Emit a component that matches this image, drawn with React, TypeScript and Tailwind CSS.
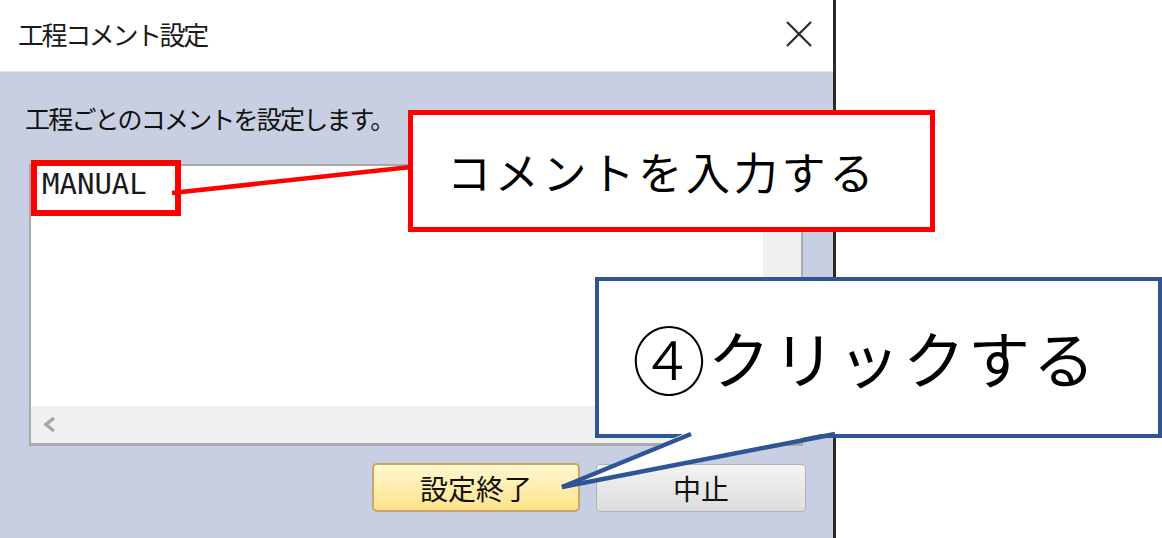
import React from "react";

const JP = '"Noto Sans CJK JP", "Noto Sans", sans-serif';

function ChevronLeft() {
  return (
    <svg width="16" height="17" viewBox="0 0 16 17">
      <path d="M12 2 L4 8.5 L12 15" fill="none" stroke="#a6a6a6" strokeWidth="3.5" />
    </svg>
  );
}
function ChevronRight() {
  return (
    <svg width="16" height="17" viewBox="0 0 16 17">
      <path d="M4 2 L12 8.5 L4 15" fill="none" stroke="#a6a6a6" strokeWidth="3.5" />
    </svg>
  );
}
function ChevronUp() {
  return (
    <svg width="17" height="16" viewBox="0 0 17 16">
      <path d="M2 12 L8.5 4 L15 12" fill="none" stroke="#a6a6a6" strokeWidth="3.5" />
    </svg>
  );
}
function ChevronDown() {
  return (
    <svg width="17" height="16" viewBox="0 0 17 16">
      <path d="M2 4 L8.5 12 L15 4" fill="none" stroke="#a6a6a6" strokeWidth="3.5" />
    </svg>
  );
}

export default function App() {
  return (
    <div
      className="relative w-[1162px] h-[538px] bg-white overflow-hidden"
      style={{ fontFamily: JP }}
    >
      {/* Dialog */}
      <div className="w-[836px] h-[538px] flex flex-col border-r-[3px] border-[#2a2a2a]">
        {/* Title bar */}
        <div className="h-[72px] flex items-center justify-between pl-[18px] pr-[21px] pb-[3px] bg-white border-b border-[#dfe2ea]">
          <span className="text-[26px] leading-none tracking-[-2.4px] text-[#1a1a1a]">
            工程コメント設定
          </span>
          <svg width="26" height="26" viewBox="0 0 26 26">
            <path d="M1 1 L25 25 M25 1 L1 25" stroke="#2b2b2b" strokeWidth="2.2" fill="none" />
          </svg>
        </div>

        {/* Body */}
        <div className="flex-1 bg-[#c9cfe2] flex flex-col">
          <div className="ml-[25px] mt-[31px] text-[25px] leading-[30px] tracking-[-1.8px] text-[#111]">
            工程ごとのコメントを設定します。
          </div>

          {/* Text box */}
          <div className="ml-[29px] mt-[31px] w-[774px] h-[282px] border-2 border-b-[3px] border-[#a9a9a9] bg-white grid grid-cols-[1fr_38px] grid-rows-[1fr_37px]">
            <div className="pl-[11px] pt-[4px]">
              <span
                className="text-[29px] leading-[29px] text-[#1a1a1a]"
                style={{ fontFamily: '"DejaVu Sans Mono", "Liberation Mono", monospace' }}
              >
                MANUAL
              </span>
            </div>
            <div className="bg-[#f0f0f0] flex flex-col items-center justify-between py-[11px]">
              <ChevronUp />
              <ChevronDown />
            </div>
            <div className="bg-[#f0f0f0] flex items-center justify-between px-[11px]">
              <ChevronLeft />
              <ChevronRight />
            </div>
            <div className="bg-[#f0f0f0]" />
          </div>

          {/* Buttons */}
          <div className="ml-[372px] mt-[17px] flex items-start gap-[16px]">
            <div className="w-[208px] h-[49px] rounded-[5px] border-2 border-[#cfa468] bg-gradient-to-b from-[#fff7cf] to-[#fde389] flex items-center justify-center text-[28px] leading-none text-[#111]">
              設定終了
            </div>
            <div className="mt-[1px] w-[210px] h-[48px] rounded-[4px] border border-[#b3b3b3] bg-gradient-to-b from-[#f3f3f3] to-[#dcdcdc] flex items-center justify-center text-[28px] leading-none text-[#111]">
              中止
            </div>
          </div>
        </div>
      </div>

      {/* Red highlight around MANUAL */}
      <div className="absolute left-[31px] top-[160px] w-[150px] h-[56px] border-[6px] border-[#ff0000]" />

      {/* Connector line */}
      <svg className="absolute left-0 top-0 pointer-events-none" width="1162" height="538">
        <line x1="172" y1="193" x2="411" y2="167" stroke="#ff0000" strokeWidth="4.5" />
      </svg>

      {/* Red callout */}
      <div className="absolute left-[408px] top-[110px] w-[527px] h-[122px] border-[5px] border-[#ff0000] bg-white flex items-center pl-[34px]">
        <span className="text-[44px] leading-none tracking-[3.8px] text-black">
          コメントを入力する
        </span>
      </div>

      {/* Blue callout */}
      <div className="absolute left-[595px] top-[277px] w-[567px] h-[161px] border-[4.5px] border-[#2f5597] bg-white flex items-center pl-[33px] pb-[2px]">
        <span className="text-[74px] leading-none text-black font-light">④</span>
        <span className="text-[62px] leading-none tracking-[3px] text-black ml-[2px]">
          クリックする
        </span>
      </div>
      <svg className="absolute left-0 top-0 pointer-events-none" width="1162" height="538">
        <polygon points="690,431 836,431 562,487" fill="#ffffff" />
        <line x1="691" y1="434" x2="562" y2="487" stroke="#2f5597" strokeWidth="4.5" />
        <line x1="835" y1="434" x2="562" y2="487" stroke="#2f5597" strokeWidth="4.5" />
      </svg>
    </div>
  );
}
